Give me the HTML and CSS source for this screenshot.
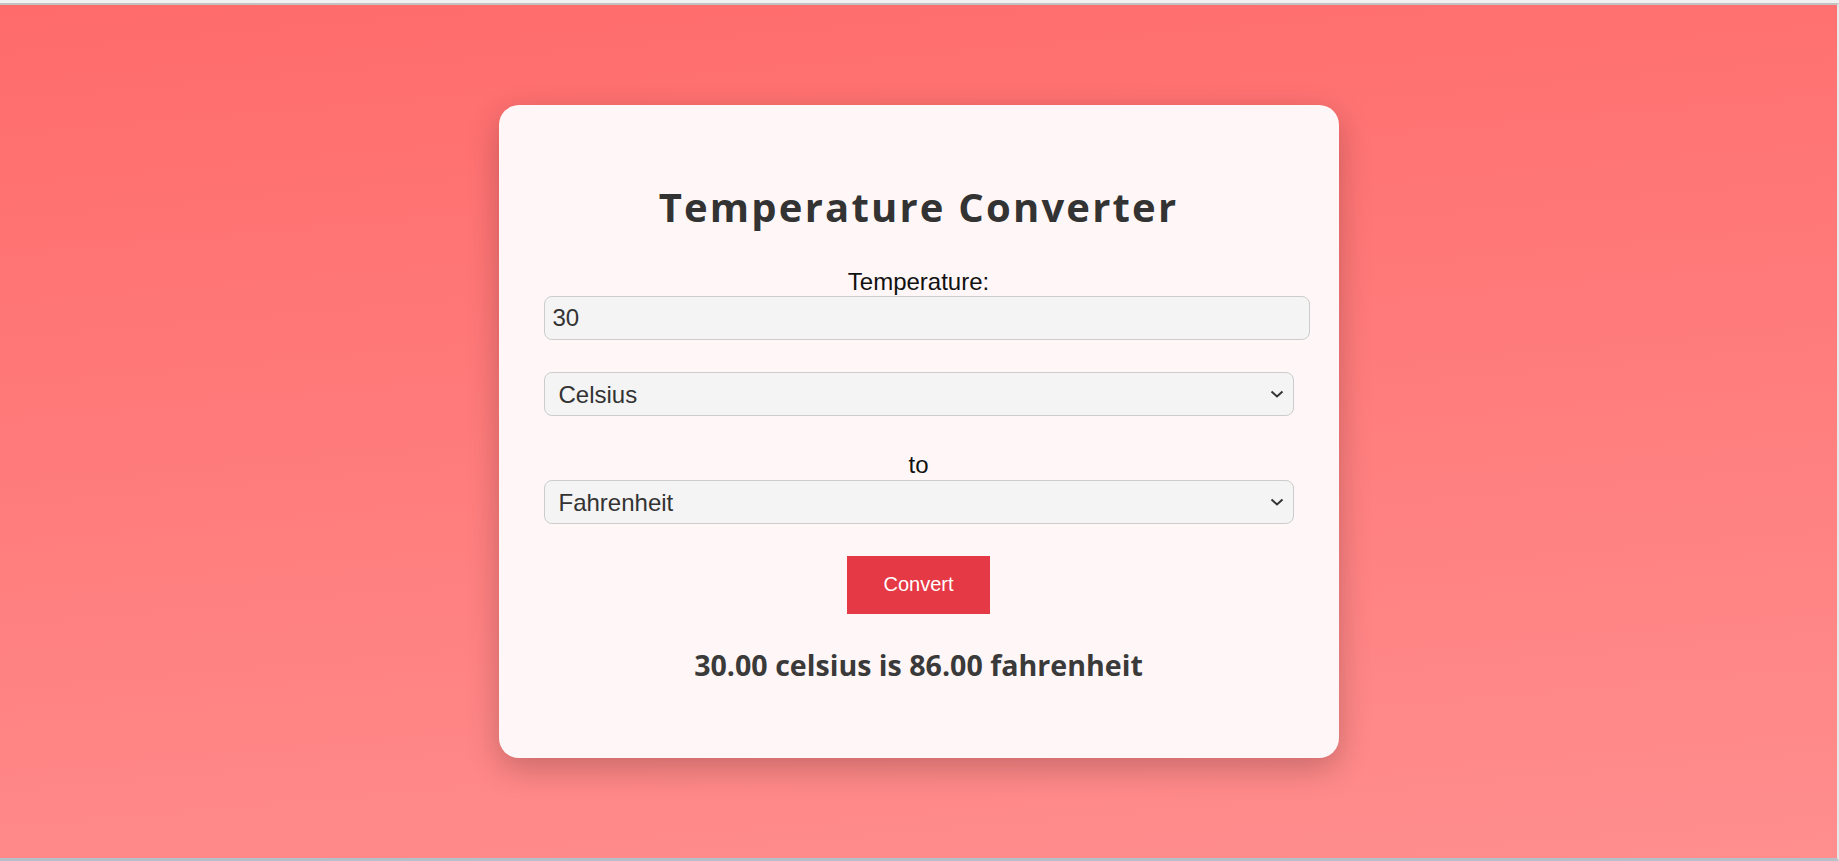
FILE: index.html
```html
<!DOCTYPE html>
<html lang="en">
<head>
<meta charset="utf-8">
<title>Temperature Converter</title>
<link rel="stylesheet" href="styles.css">
</head>
<body>
<div class="page">
  <main class="card">
    <h1 class="title">Temperature Converter</h1>
    <label class="field-label" for="temp">Temperature:</label>
    <input class="text-input" id="temp" type="number" value="30">
    <div class="select-wrap first">
      <select class="unit-select">
        <option selected>Celsius</option>
        <option>Fahrenheit</option>
        <option>Kelvin</option>
      </select>
      <svg class="chevron" width="14" height="8" viewBox="0 0 14 8"><path d="M1.5 1.5 L7 6.5 L12.5 1.5" fill="none" stroke="#333" stroke-width="2"/></svg>
    </div>
    <label class="field-label to-label">to</label>
    <div class="select-wrap">
      <select class="unit-select">
        <option>Celsius</option>
        <option selected>Fahrenheit</option>
        <option>Kelvin</option>
      </select>
      <svg class="chevron" width="14" height="8" viewBox="0 0 14 8"><path d="M1.5 1.5 L7 6.5 L12.5 1.5" fill="none" stroke="#333" stroke-width="2"/></svg>
    </div>
    <button class="convert-btn" type="button">Convert</button>
    <p class="result">30.00 celsius is 86.00 fahrenheit</p>
  </main>
</div>
</body>
</html>
```

FILE: styles.css
```css
html {
  margin: 0;
  background: #f1f1f1;
}
body {
  margin: 0;
  height: 861px;
  overflow: hidden;
  font-family: "Liberation Sans", Arial, sans-serif;
}
.page {
  box-sizing: border-box;
  margin-top: 3px;
  height: 858px;
  border-top: 2px solid #c2c2c2;
  border-bottom: 3px solid #b7c0c9;
  border-right: 2px solid #e6e6e6;
  background: linear-gradient(175deg, #ff6b6b 0%, #ff8e8e 100%);
  display: flex;
  align-items: center;
  justify-content: center;
}
.card {
  width: 750px;
  padding: 45px;
  background: #fff7f7;
  border-radius: 20px;
  box-shadow: 0 10px 32px rgba(0, 0, 0, 0.22);
  text-align: center;
}
.title {
  margin: 30px 0 35px;
  font-family: "Open Sans", "Noto Sans", sans-serif;
  font-weight: 700;
  font-size: 40px;
  line-height: 54px;
  letter-spacing: 2.2px;
  color: #333;
}
.field-label {
  display: block;
  font-size: 24px;
  line-height: 26px;
  color: #111;
  margin-bottom: 1px;
}
.to-label {
  margin-top: 36px;
  margin-bottom: 1.5px;
}
.text-input {
  display: block;
  box-sizing: border-box;
  width: calc(100% + 16px);
  height: 44.5px;
  margin: 0;
  padding: 0 8px;
  font-family: "Liberation Sans", Arial, sans-serif;
  font-size: 24px;
  color: #333;
  background: #f4f4f4;
  border: 1px solid #ccc;
  border-radius: 8px;
  outline: none;
  -moz-appearance: textfield;
}
.text-input::-webkit-outer-spin-button,
.text-input::-webkit-inner-spin-button {
  -webkit-appearance: none;
  margin: 0;
}
.select-wrap {
  position: relative;
}
.select-wrap.first {
  margin-top: 31.5px;
}
.unit-select {
  display: block;
  box-sizing: border-box;
  width: 100%;
  height: 44.5px;
  margin: 0;
  padding: 0 30px 0 14px;
  font-family: "Liberation Sans", Arial, sans-serif;
  font-size: 24px;
  color: #333;
  background: #f4f4f4;
  border: 1px solid #ccc;
  border-radius: 8px;
  -webkit-appearance: none;
  appearance: none;
  outline: none;
}
.chevron {
  position: absolute;
  right: 10px;
  top: 18px;
  pointer-events: none;
}
.convert-btn {
  display: inline-block;
  margin-top: 31.5px;
  padding: 17.5px 36px;
  border: none;
  border-radius: 0;
  background: #e63946;
  color: #fff;
  font-family: "Liberation Sans", Arial, sans-serif;
  font-size: 20px;
  line-height: 23px;
  vertical-align: top;
}
.result {
  margin: 32px 0 29.5px;
  font-family: "Open Sans", "Noto Sans", sans-serif;
  font-weight: 700;
  font-size: 28.6px;
  line-height: 38px;
  color: #3a3a3a;
}
```
